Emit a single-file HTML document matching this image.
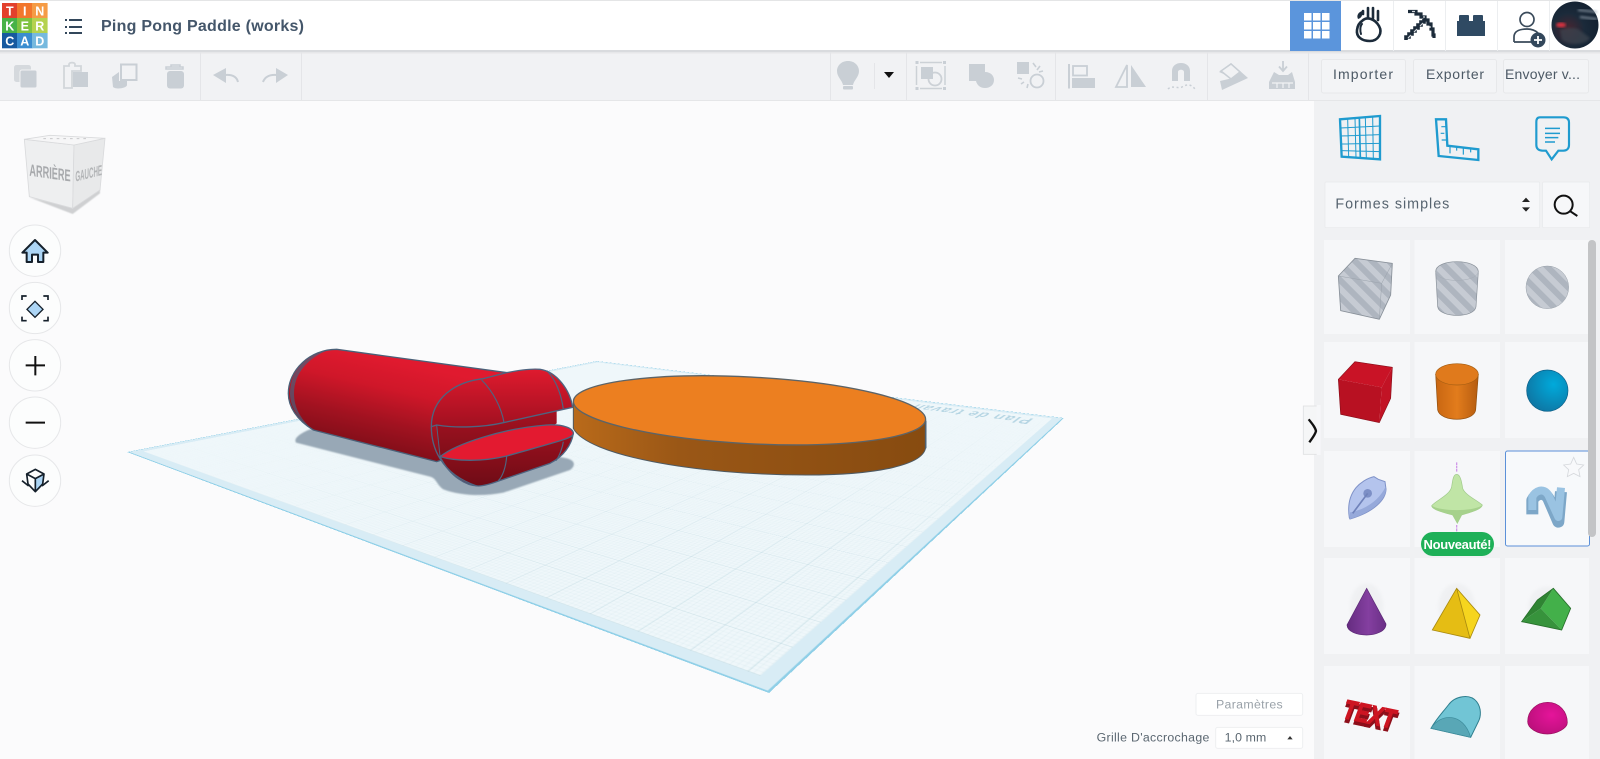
<!DOCTYPE html>
<html lang="fr">
<head>
<meta charset="utf-8">
<title>Ping Pong Paddle (works)</title>
<style>
html,body{margin:0;padding:0;width:1600px;height:759px;overflow:hidden;background:#fbfbfc;font-family:"Liberation Sans",sans-serif}
#plane{position:absolute;left:0;top:0;width:1000px;height:1000px;box-sizing:border-box;transform-origin:0 0;
transform:matrix3d(.89093,.16353,0,.00070507,.23985,-.1214,0,-.00052295,0,0,1,0,127,452,0,1);
background:#d8ecf5;border:2px solid #8fcfe7;overflow:hidden}
#plane .in{position:absolute;left:13px;top:13px;right:13px;bottom:13px;background-color:#eff7fa}
#plane .grid{position:absolute;left:0;top:0;right:0;bottom:0;
background-image:
linear-gradient(to right,rgba(135,180,195,.2) 1px,transparent 1px),
linear-gradient(to bottom,rgba(135,180,195,.2) 1px,transparent 1px),
linear-gradient(to right,rgba(150,195,210,.09) 1px,transparent 1px),
linear-gradient(to bottom,rgba(150,195,210,.09) 1px,transparent 1px);
background-size:48px 48px,48px 48px,4.8px 4.8px,4.8px 4.8px;
-webkit-mask-image:radial-gradient(circle at 0% 100%,#000 15%,rgba(0,0,0,.3) 50%,transparent 80%);
mask-image:radial-gradient(circle at 0% 100%,#000 15%,rgba(0,0,0,.3) 50%,transparent 80%)}
#plane .lbl{position:absolute;left:905px;top:960px;transform-origin:0 0;transform:rotate(-90deg) scaleX(.34);font:bold 70px/1 "Liberation Sans",sans-serif;color:#b5d5e3;white-space:nowrap;letter-spacing:6px}
#art{position:absolute;left:0;top:0;filter:blur(.3px)}
#art text{font-family:"Liberation Sans",sans-serif}
</style>
</head>
<body>
<div id="plane"><div class="in"><div class="grid"></div></div><div class="lbl">Plan de travail</div></div>
<svg id="art" width="1600" height="759" viewBox="0 0 1600 759" xmlns="http://www.w3.org/2000/svg">
<defs>
<pattern id="st" width="36" height="36" patternUnits="userSpaceOnUse" patternTransform="rotate(-45)"><rect width="36" height="36" fill="#aeb5bf"/><rect width="18" height="36" fill="#c6cbd3"/></pattern>
<linearGradient id="capG" gradientUnits="userSpaceOnUse" x1="350" y1="85" x2="285" y2="370"><stop offset="0" stop-color="#e01a2f"/><stop offset=".3" stop-color="#cf1729"/><stop offset=".65" stop-color="#a01220"/><stop offset="1" stop-color="#7a0d17"/></linearGradient>
<linearGradient id="topG" x1="0" y1="0" x2="0" y2="1"><stop offset="0" stop-color="#df1a2e"/><stop offset="1" stop-color="#a01020"/></linearGradient>
<linearGradient id="lowG" x1="0" y1="0" x2="0" y2="1"><stop offset="0" stop-color="#9a101e"/><stop offset="1" stop-color="#6f0c16"/></linearGradient>
<linearGradient id="midG" x1="0" y1="0" x2="0" y2="1"><stop offset="0" stop-color="#a81222"/><stop offset="1" stop-color="#7f0e19"/></linearGradient>
<linearGradient id="diskS" x1="0" y1="0" x2="1" y2="0"><stop offset="0" stop-color="#b96a1a"/><stop offset=".3" stop-color="#9a5716"/><stop offset="1" stop-color="#874b10"/></linearGradient>
<linearGradient id="cyl" x1="0" y1="0" x2="1" y2="0"><stop offset="0" stop-color="#c86612"/><stop offset=".5" stop-color="#e27c1c"/><stop offset="1" stop-color="#b55c10"/></linearGradient>
<linearGradient id="cone" x1="0" y1="0" x2="1" y2="0"><stop offset="0" stop-color="#652c80"/><stop offset=".55" stop-color="#843fa0"/><stop offset="1" stop-color="#6a2f86"/></linearGradient>
<radialGradient id="sph" cx=".65" cy=".35" r=".8"><stop offset="0" stop-color="#00aadb"/><stop offset="1" stop-color="#10709d"/></radialGradient>
<radialGradient id="sph2" cx=".6" cy=".4" r=".8"><stop offset="0" stop-color="#e5149a"/><stop offset="1" stop-color="#b30f75"/></radialGradient>
<radialGradient id="ava" cx=".35" cy=".6" r=".7"><stop offset="0" stop-color="#4a2530"/><stop offset=".5" stop-color="#1b2a3a"/><stop offset="1" stop-color="#122030"/></radialGradient>
<filter id="bl"><feGaussianBlur stdDeviation="1.2"/></filter>
<filter id="bl6"><feGaussianBlur stdDeviation="5"/></filter>
<filter id="bl3"><feGaussianBlur stdDeviation="2"/></filter>
</defs>

<!-- header -->
<rect x="0" y="0" width="1600" height="51" fill="#fff"/>
<rect x="0" y="0" width="1600" height="1" fill="#e4e5e6"/>
<rect x="0" y="52" width="1600" height="48" fill="#f1f2f4"/>
<rect x="0" y="50" width="1600" height="2" fill="#d9dbde"/>
<rect x="0" y="52" width="1600" height="1.5" fill="#e6e7e9"/>
<rect x="0" y="100" width="1600" height="1" fill="#e5e6e8"/>

<!-- logo -->
<g font-weight="700" font-size="12.5" fill="#fff" text-anchor="middle">
<rect x="2" y="3" width="15.6" height="15.3" fill="#e2402c"/><rect x="17" y="3" width="15.6" height="15.3" fill="#f2762c"/><rect x="32" y="3" width="15.6" height="15.3" fill="#f59b45"/>
<rect x="2" y="18" width="15.6" height="15.3" fill="#47b247"/><rect x="17" y="18" width="15.6" height="15.3" fill="#7fc241"/><rect x="32" y="18" width="15.6" height="15.3" fill="#b5d24f"/>
<rect x="2" y="33" width="15.6" height="15.3" fill="#17599f"/><rect x="17" y="33" width="15.6" height="15.3" fill="#3a8dd0"/><rect x="32" y="33" width="15.6" height="15.3" fill="#76b9de"/>
<text x="9.8" y="15.500">T</text><text x="24.8" y="15.500">I</text><text x="39.8" y="15.500">N</text>
<text x="9.8" y="30.500">K</text><text x="24.8" y="30.500">E</text><text x="39.8" y="30.500">R</text>
<text x="9.8" y="45.500">C</text><text x="24.8" y="45.500">A</text><text x="39.8" y="45.500">D</text>
</g>
<!-- hamburger -->
<g fill="#33475b"><rect x="65" y="19" width="2" height="2"/><rect x="65" y="26" width="2" height="2"/><rect x="65" y="32" width="2" height="2"/><rect x="69" y="19" width="13" height="2"/><rect x="69" y="26" width="13" height="2"/><rect x="69" y="32" width="13" height="2"/></g>
<text x="101" y="31" font-size="16" font-weight="700" fill="#44566a" textLength="203" lengthAdjust="spacing">Ping Pong Paddle (works)</text>

<!-- header right -->
<rect x="1290" y="1" width="51" height="50" fill="#5b95dc"/>
<g fill="#fff"><rect x="1304" y="13" width="7.5" height="7.5"/><rect x="1313" y="13" width="7.5" height="7.5"/><rect x="1322" y="13" width="7.5" height="7.5"/><rect x="1304" y="22" width="7.5" height="7.5"/><rect x="1313" y="22" width="7.5" height="7.5"/><rect x="1322" y="22" width="7.5" height="7.5"/><rect x="1304" y="31" width="7.5" height="7.5"/><rect x="1313" y="31" width="7.5" height="7.5"/><rect x="1322" y="31" width="7.5" height="7.5"/></g>
<g fill="#eceef0"><rect x="1393" y="1" width="1" height="50"/><rect x="1445" y="1" width="1" height="50"/><rect x="1497" y="1" width="1" height="50"/><rect x="1549" y="1" width="1" height="50"/></g>
<!-- rock -->
<g fill="none" stroke="#1c2b3a" stroke-width="2.6" stroke-linecap="round"><path d="M1362 21C1367 16 1375 19 1379 26C1383 33 1378 41 1370 41C1362 41 1356 37 1357 30C1357.500 26 1359 23 1362 21Z"/><path d="M1362 24C1360 26 1360 31 1361 34" stroke-width="2"/><path d="M1368 8V17M1373 8V18M1378 11V20M1363 11V14"/></g>
<path d="M1358 19C1356 15 1359 12 1362 11C1363 14 1362 18 1358 19Z" fill="#1c2b3a"/>
<!-- pickaxe -->
<path d="M1406 40V37H1409V34H1412V31H1415V28H1418V25H1421V22H1424V19" fill="none" stroke="#1c2b3a" stroke-width="3.600"/>
<path d="M1408 38L1411 35M1414 32L1417 29M1420 26L1423 23" stroke="#d5d9dd" stroke-width="1.200"/>
<path d="M1408 11.500H1416V14H1421V17H1425V20H1428V24H1431V29H1433V35H1434V38" fill="none" stroke="#1c2b3a" stroke-width="3.200"/>
<path d="M1412 11.500H1415M1423 17H1425M1430 26V28" stroke="#d5d9dd" stroke-width="1.200"/>
<!-- brick -->
<g fill="#2f4a63"><rect x="1457" y="21" width="28" height="15"/><rect x="1459" y="15" width="10" height="7" rx="1"/><rect x="1473" y="15" width="10" height="7" rx="1"/></g>
<!-- user -->
<g fill="none" stroke="#3a4a5a" stroke-width="1.7"><circle cx="1527" cy="19.500" r="7"/><path d="M1514 42V37C1514 31 1520 29 1527 29C1532 29 1535 30 1538 33M1514 42H1531"/></g>
<circle cx="1538" cy="40" r="7.500" fill="#33475b"/><path d="M1534 40H1542M1538 36V44" stroke="#fff" stroke-width="1.800"/>
<!-- avatar -->
<circle cx="1575" cy="25" r="23.500" fill="url(#ava)"/>
<path d="M1560 30C1566 28 1572 27 1578 29L1590 38C1586 45 1570 46 1562 40Z" fill="#3a424e" opacity=".8" filter="url(#bl)"/>
<ellipse cx="1561" cy="25" rx="5" ry="2.500" fill="#d53340" filter="url(#bl)"/>
<path d="M1578 10L1597 12M1580 17L1597 19" stroke="#9aa6b2" stroke-width="1.600" filter="url(#bl)"/>

<!-- toolbar dividers -->
<g fill="#e4e5e8"><rect x="200" y="52" width="1" height="48"/><rect x="301" y="52" width="1" height="48"/><rect x="830" y="52" width="1" height="48"/><rect x="906" y="52" width="1" height="48"/><rect x="1055" y="52" width="1" height="48"/><rect x="1207" y="52" width="1" height="48"/><rect x="1308" y="52" width="1" height="48"/><rect x="874" y="63" width="1" height="26"/></g>
<!-- toolbar icons -->
<g fill="#c9cfd5">
<rect x="14" y="65" width="17" height="17" rx="2.500" fill="#d5d9dd"/><rect x="20" y="70" width="17" height="18" rx="2" stroke="#f1f2f4" stroke-width="1"/>
<path d="M64 66H69V64.500C69 62 75 62 75 64.500V66H81V71H72V88H64Z" fill="none" stroke="#d2d6da" stroke-width="1.800"/><rect x="73" y="72" width="15" height="15"/>
<rect x="121" y="64.500" width="15.500" height="15.500" fill="none" stroke="#c9cfd5" stroke-width="2"/><path d="M119 72V81H127V85C127 88 116 90 113 87L112 77Z"/>
<path d="M168 67H183V69H166V67ZM171 67V65H180V67" fill="none" stroke="#c9cfd5" stroke-width="1.500"/><rect x="167" y="71" width="17" height="17.500" rx="3"/>
<path d="M213 75L226 68V83Z"/><path d="M225 75Q236 74 238 82" fill="none" stroke="#c9cfd5" stroke-width="2"/>
<path d="M288 75L276 68V83Z"/><path d="M277 75Q266 74 263 82" fill="none" stroke="#c9cfd5" stroke-width="2"/>
<!-- bulb -->
<path d="M848 61C841 61 837 66 837 71C837 77 842 80 843 85H853C854 80 859 77 859 71C859 66 855 61 848 61Z"/><rect x="843" y="86" width="10" height="3.500" rx="1"/>
<!-- group -->
<g fill="none" stroke="#ccd1d6" stroke-width="1.500"><path d="M920 62.500H942M920 88.500H942M916.500 66V85M945 66V85"/><circle cx="935" cy="79" r="6.500" stroke-width="1.800"/></g>
<rect x="915.500" y="61" width="3" height="3"/><rect x="943" y="61" width="3" height="3"/><rect x="915.500" y="87" width="3" height="3"/><rect x="943" y="87" width="3" height="3"/>
<rect x="921" y="67" width="12" height="12"/>
<!-- union -->
<path d="M969 64H985V72C991 72 994 76 994 80C994 85 990 88 985 88C980 88 977 85 976 81H969Z"/>
<!-- explode -->
<rect x="1017" y="62" width="12" height="12"/><circle cx="1037" cy="81" r="6.500" fill="none" stroke="#c9cfd5" stroke-width="1.800"/>
<path d="M1033 63L1036 67M1040 66L1037 70M1043 71L1039 72M1018 78L1022 79M1021 84L1024 82M1027 88L1028 84" stroke="#c9cfd5" stroke-width="1.600"/>
<!-- align -->
<rect x="1068" y="64" width="2" height="24.500"/><rect x="1073" y="66" width="14" height="9.500" fill="none" stroke="#c9cfd5" stroke-width="1.800"/><rect x="1072" y="78" width="23" height="10"/>
<!-- mirror -->
<path d="M1127 65L1116 87H1127Z" fill="none" stroke="#c9cfd5" stroke-width="1.800"/><path d="M1131 65L1146 87H1131Z"/>
<!-- magnet -->
<path d="M1172 81V71C1172 66 1176 63 1181 63C1186 63 1190 66 1190 71V81H1184V72C1184 69 1178 69 1178 72V81Z"/>
<path d="M1168 89C1172 85 1178 89 1182 87C1187 84 1191 84 1195 89" fill="none" stroke="#c9cfd5" stroke-width="1.500" stroke-dasharray="2 2.500"/>
<!-- slice -->
<path d="M1219 72L1231 63L1248 78L1222 90L1220 81L1233 78Z"/><path d="M1221 71L1231 64L1240 72L1231 79Z" fill="#f1f2f4" stroke="#c9cfd5" stroke-width="1.500"/>
<!-- drop -->
<path d="M1283 61V70M1279 66.500L1283 71L1287 66.500" fill="none" stroke="#c9cfd5" stroke-width="1.800"/>
<path d="M1274 72L1279 75H1288L1292 72L1295 82V89H1269V82Z"/><path d="M1272 83H1293M1277 83V88M1283 83V88M1289 83V88" stroke="#f1f2f4" stroke-width="1.200"/>
</g>
<path d="M884 72H894L889 78Z" fill="#111"/>
<!-- buttons -->
<g fill="#f3f4f6" stroke="#e7e8ea"><rect x="1321.500" y="59.500" width="84" height="33.500" rx="2"/><rect x="1413.500" y="59.500" width="83" height="33.500" rx="2"/><rect x="1503.500" y="59.500" width="85" height="33.500" rx="2"/></g>
<g font-size="14" fill="#4c5965"><text x="1333" y="79" textLength="60" lengthAdjust="spacing">Importer</text><text x="1426" y="79" textLength="58" lengthAdjust="spacing">Exporter</text><text x="1505" y="79" textLength="75" lengthAdjust="spacing">Envoyer v...</text></g>

<!-- sidebar -->
<rect x="1314" y="101" width="286" height="658" fill="#f0f1f3"/>
<g transform="translate(1300 100) scale(.33333)">
 <g fill="none" stroke="#1f9bcf">
  <path d="M120 58L240 48V178L125 170Z" stroke-width="7"/>
  <path d="M121 84L240 78M122 108L240 104M123 132L240 130M124 152L240 155M143 56L146 171M165 54L168 173M196 51L199 175M218 50L220 177" stroke-width="3"/>
  <path d="M178 53L181 174" stroke-width="5"/>
  <path d="M408 58H438L442 137L535 148V180L416 168Z" stroke-width="7"/>
  <path d="M424 80H438M422 100H433M425 120H440M450 140V160M470 142V152M490 144V164M512 147V157" stroke-width="3.500"/>
  <path d="M720 52H790C802 52 807 58 807 68V135C807 146 800 152 790 152H775L755 178L738 152H728C716 152 709 146 709 135V66C709 58 712 52 720 52Z" stroke-width="6.500"/>
  <path d="M735 85H780M735 100H780M735 113H775M735 126H765" stroke-width="4.500"/>
 </g>
 <rect x="75" y="246" width="644" height="137" rx="3" fill="#f6f7f9" stroke="#e8e9eb" stroke-width="2"/>
 <rect x="728" y="246" width="141" height="137" rx="3" fill="#f6f7f9" stroke="#e8e9eb" stroke-width="2"/>
 <text x="106" y="326" font-size="43" fill="#56636f" textLength="342" lengthAdjust="spacing">Formes simples</text>
 <path d="M678 293L690 306H666ZM678 335L690 322H666Z" fill="#222"/>
 <circle cx="791" cy="314" r="27" fill="none" stroke="#111" stroke-width="6"/><path d="M811 334L832 348" stroke="#111" stroke-width="6"/>
</g>

<!-- tiles -->
<g fill="#f6f7f9">
<rect x="1324" y="240" width="86" height="94"/><rect x="1414.500" y="240" width="85.500" height="94"/><rect x="1505" y="240" width="84" height="94"/>
<rect x="1324" y="342" width="86" height="96"/><rect x="1414.500" y="342" width="85.500" height="96"/><rect x="1505" y="342" width="84" height="96"/>
<rect x="1324" y="451" width="86" height="96"/><rect x="1414.500" y="451" width="85.500" height="96"/>
<rect x="1324" y="558" width="86" height="96"/><rect x="1414.500" y="558" width="85.500" height="96"/><rect x="1505" y="558" width="84" height="96"/>
<rect x="1324" y="666" width="86" height="93"/><rect x="1414.500" y="666" width="85.500" height="93"/><rect x="1505" y="666" width="84" height="93"/>
</g>
<rect x="1505.500" y="451" width="84" height="95" rx="2" fill="#f7f9fb" stroke="#5b90d8"/>

<!-- row 1 striped -->
<g transform="translate(1300 100) scale(.33333)">
 <path d="M165 475L277 490L272 585L238 658L122 632L115 528Z" fill="url(#st)" stroke="#878f98" stroke-width="2.500"/>
 <path d="M115 528L245 550L277 490M245 550L238 658" fill="none" stroke="#9aa2ab" stroke-width="1.500"/>
 <path d="M407 515C407 475 533 475 535 515L528 620C525 655 418 655 413 620Z" fill="url(#st)" stroke="#878f98" stroke-width="2"/>
 <path d="M407 515C410 550 530 550 535 515" fill="none" stroke="#a5acb5" stroke-width="1.500"/>
 <circle cx="742" cy="562" r="64" fill="url(#st)" stroke="#9aa2ab" stroke-width="1.500"/>
</g>
<!-- row 2/3 -->
<g transform="translate(1300 335) scale(.33333)">
 <path d="M165 80L277 97L245 157L115 133Z" fill="#c91326"/><path d="M115 133L245 157L238 263L122 238Z" fill="#b81122"/><path d="M277 97L272 190L238 263L245 157Z" fill="#c21325"/>
 <path d="M165 80L277 97L272 190L238 263L122 238L115 133Z" fill="none" stroke="#8a0e1a" stroke-width="2"/>
 <path d="M407 118L413 225C420 262 522 262 527 225L535 118Z" fill="url(#cyl)" stroke="#8f4f10" stroke-width="2"/>
 <ellipse cx="471" cy="118" rx="64" ry="32" fill="#e07a1c" stroke="#a55e12" stroke-width="2"/>
 <circle cx="742" cy="167" r="62" fill="url(#sph)" stroke="#0d5f88" stroke-width="2"/>
 <!-- collapse tab -->
 <rect x="10" y="213" width="50" height="145" fill="#f5f6f7" stroke="#dfe0e2" stroke-width="2.500"/>
 <rect x="50" y="210" width="12" height="150" fill="#f6f7f9"/>
 <path d="M26 253C38 268 46 278 48 288C46 298 38 308 28 322" fill="none" stroke="#111" stroke-width="7"/>
 <!-- pen -->
 <path d="M148 548C142 510 150 480 168 458C180 444 200 430 222 425L235 433L255 440L258 462C258 492 225 530 150 552Z" fill="#b4c4ed" stroke="#7f92c8" stroke-width="3"/>
 <path d="M150 532C205 522 240 490 257 455L258 468C250 500 215 532 150 552Z" fill="#96a9da"/>
 <circle cx="203" cy="475" r="13" fill="#7c8fc6"/><path d="M203 475L158 535" stroke="#6f82ba" stroke-width="5"/>
 <!-- spinner -->
 <path d="M470 382V412M470 570V592" stroke="#d09ae8" stroke-width="4" stroke-dasharray="8 2"/>
 <path d="M470 418C481 418 485 440 488 460C495 480 530 495 547 510C545 525 500 535 485 540L472 565L458 540C440 535 395 525 395 512C410 495 450 480 455 455C458 435 460 418 470 418Z" fill="#c0e5a6" stroke="#9fca8a" stroke-width="2"/>
 <path d="M395 512C420 530 525 530 547 510C545 525 500 535 485 540L472 565L458 540C440 535 395 525 395 512Z" fill="#a6d18c"/>
 <!-- squiggle -->
 <path d="M697 530L697 488C705 470 730 458 745 482L775 552L783 462" fill="none" stroke="#7da7c8" stroke-width="36" stroke-linejoin="round" transform="translate(0 8)"/>
 <path d="M697 525L697 486C705 468 730 456 745 480L775 546L783 458" fill="none" stroke="#9ac3e2" stroke-width="24" stroke-linejoin="round"/>
 <path d="M821 367L830 387L851 390L836 404L840 425L821 415L802 425L806 404L791 390L812 387Z" fill="#f8f9fb" stroke="#d5d8dc" stroke-width="2.500"/>
</g>
<rect x="1588" y="240" width="8" height="297" rx="4" fill="#c3c4c6"/>
<rect x="1421" y="532" width="73" height="24" rx="12" fill="#1eb058"/>
<text x="1457.500" y="549" text-anchor="middle" font-size="13" font-weight="700" fill="#fff" textLength="68" lengthAdjust="spacing">Nouveauté!</text>

<!-- row 4/5 -->
<g transform="translate(1300 550) scale(.33333)">
 <ellipse cx="200" cy="170" rx="50" ry="70" fill="#d6d8da" opacity=".2" filter="url(#bl6)"/>
 <ellipse cx="470" cy="170" rx="55" ry="70" fill="#d6d8da" opacity=".2" filter="url(#bl6)"/>
 <ellipse cx="740" cy="170" rx="55" ry="60" fill="#d6d8da" opacity=".2" filter="url(#bl6)"/>
 <path d="M200 115L258 222C258 245 225 255 200 255C170 255 142 245 141 225Z" fill="url(#cone)" stroke="#5a2875" stroke-width="2"/>
 <path d="M470 115L397 240L510 265Z" fill="#e5bd14"/><path d="M470 115L510 265L540 195Z" fill="#f6d51e"/>
 <path d="M470 115L397 240L510 265L540 195Z M470 115L510 265" fill="none" stroke="#a98a10" stroke-width="2.500"/>
 <path d="M760 115L812 175L785 240L722 175Z" fill="#43b04a"/><path d="M760 115L722 175L665 215L712 150Z" fill="#2f8433"/><path d="M722 175L785 240L665 215Z" fill="#37933c"/>
 <path d="M760 115L812 175L785 240L665 215L712 150Z" fill="none" stroke="#266f2a" stroke-width="2.500"/>
 <text x="0" y="0" font-size="80" font-weight="700" font-style="italic" fill="#8d0f1b" stroke="#8d0f1b" stroke-width="8" transform="translate(126 512) rotate(12)" textLength="156" lengthAdjust="spacingAndGlyphs">TEXT</text>
 <text x="0" y="0" font-size="80" font-weight="700" font-style="italic" fill="#cd1522" stroke="#cd1522" stroke-width="4" transform="translate(126 503) rotate(12)" textLength="156" lengthAdjust="spacingAndGlyphs">TEXT</text>
 <path d="M393 535C410 505 430 485 445 465C465 437 510 430 530 455C545 475 543 500 535 515L512 562Z" fill="#71c5d5" stroke="#2f7f8f" stroke-width="3"/>
 <path d="M393 535C420 490 490 485 512 562Z" fill="#59a7b6" stroke="#3c8b9b" stroke-width="2"/>
 <path d="M683 515C683 480 712 457 743 457C778 457 802 485 802 518C802 535 770 552 742 552C712 552 683 535 683 515Z" fill="url(#sph2)" stroke="#99105f" stroke-width="2"/>
</g>

<!-- params -->
<g transform="translate(1060 680) scale(.33333)">
 <rect x="408" y="40" width="320" height="66" rx="6" fill="#fff" stroke="#eeeff1" stroke-width="3"/>
 <text x="468" y="85" font-size="37" fill="#9aa2a9" textLength="200" lengthAdjust="spacing">Paramètres</text>
 <text x="110" y="184" font-size="37" fill="#5a6670" textLength="338" lengthAdjust="spacing">Grille D'accrochage</text>
 <rect x="467" y="142" width="261" height="63" rx="6" fill="#fff" stroke="#eeeff1" stroke-width="3"/>
 <text x="494" y="184" font-size="37" fill="#5a6670" textLength="125" lengthAdjust="spacing">1,0 mm</text>
 <path d="M690 168L698 178H682Z" fill="#333"/>
</g>

<!-- view cube + nav -->
<g transform="translate(0 110) scale(.33333)">
 <path d="M88 262L218 312L300 250L300 235L218 290Z" fill="#cfd0d2" filter="url(#bl)"/>
 <path d="M73 88L222 105L218 295L88 260Z" fill="#eeeff0" stroke="#d9dadc" stroke-width="2.500"/>
 <path d="M222 105L315 85L300 240L218 295Z" fill="#e8e9ea" stroke="#d9dadc" stroke-width="2.500"/>
 <path d="M73 88L150 76L315 85L222 105Z" fill="#f6f6f7" stroke="#d9dadc" stroke-width="2.500"/>
 <path d="M130 86H270" stroke="#c8c9cb" stroke-width="3" stroke-dasharray="8 12"/>
 <text transform="translate(88 197) skewY(8)" font-size="50" font-weight="700" fill="#a7a9ac" textLength="124" lengthAdjust="spacingAndGlyphs">ARRIÈRE</text>
 <text transform="translate(226 215) skewY(-14)" font-size="44" font-weight="700" fill="#b2b4b6" textLength="80" lengthAdjust="spacingAndGlyphs">GAUCHE</text>
 <g fill="#fcfdfd" stroke="#e6e7e9" stroke-width="3">
  <circle cx="105" cy="422" r="77"/><circle cx="105" cy="594" r="77"/><circle cx="105" cy="766" r="77"/><circle cx="105" cy="938" r="77"/><circle cx="105" cy="1112" r="77"/>
 </g>
 <path d="M105 390L143 428H130V456H114V434H96V456H80V428H67Z" fill="#acd5f5" stroke="#15202b" stroke-width="6" stroke-linejoin="round"/>
 <path d="M105 574L129 598L105 622L81 598Z" fill="#acd5f5" stroke="#15202b" stroke-width="4"/>
 <path d="M66 570V558H80M130 558H144V570M66 620V632H80M130 632H144V620" fill="none" stroke="#15202b" stroke-width="5"/>
 <path d="M77 766H135M106 738V796" fill="none" stroke="#111" stroke-width="6"/>
 <path d="M77 938H135" stroke="#111" stroke-width="6"/>
 <path d="M106 1145V1106L132 1092L128 1122Z" fill="#acd5f5"/>
 <path d="M80 1092L106 1078L132 1092L128 1122L106 1145L84 1122ZM80 1092L106 1106L132 1092M106 1106V1145" fill="none" stroke="#15202b" stroke-width="5" stroke-linejoin="round"/>
 <path d="M66 1112L86 1128M146 1112L126 1128" stroke="#15202b" stroke-width="5"/>
</g>

<!-- shadow & capsule -->
<g transform="translate(270 330) scale(.33333)">
 <path d="M120 298C90 310 70 325 78 338L480 440C500 445 500 465 520 478C570 497 640 500 700 488L900 420C920 405 915 388 880 383L500 300Z" fill="#98a8b6" filter="url(#bl3)"/>
 <path d="M200 58L712 128L850 280L500 395L130 300C80 270 55 230 55 190C55 120 120 58 200 58Z" fill="url(#capG)" stroke="#4a6078" stroke-width="4" stroke-linejoin="round"/>
 <path d="M60 190C60 130 100 80 170 62C115 85 72 130 72 190C72 230 90 265 125 296C85 270 60 230 60 190Z" fill="#4a5f7a" opacity=".7"/>
 <!-- cap region behind -->
 <path d="M500 285L860 230V280L705 378L510 380Z" fill="url(#midG)"/>
 <!-- top half -->
 <path d="M484 290C484 205 555 155 640 146L710 128C740 122 780 115 810 118C860 125 900 180 908 232L700 278C640 292 560 295 500 285Z" fill="url(#topG)" stroke="#4f6480" stroke-width="4" stroke-linejoin="round"/>
 <path d="M635 150C670 185 695 235 702 278M830 122C860 150 875 200 880 238" fill="none" stroke="#4f6480" stroke-width="3.500"/>
 <!-- lower bowl -->
 <path d="M510 380C540 440 590 468 625 468C650 468 680 455 700 448L840 400C880 380 905 345 910 310L710 378Z" fill="url(#lowG)" stroke="#4f6480" stroke-width="4" stroke-linejoin="round"/>
 <path d="M484 290C484 350 510 430 620 468" fill="none" stroke="#4f6480" stroke-width="4"/>
 <path d="M500 285L510 378" fill="none" stroke="#4f6480" stroke-width="3"/>
 <path d="M710 378C708 410 698 440 685 452M880 335C878 350 870 375 858 392" fill="none" stroke="#4f6480" stroke-width="3.500"/>
 <!-- flat red -->
 <path d="M510 380C560 340 700 295 830 285C880 282 912 295 910 312C905 325 880 330 710 378C640 395 560 395 510 380Z" fill="#e31a30" stroke="#4f6480" stroke-width="4"/>
</g>

<!-- orange disk -->
<g transform="translate(560 350) scale(.33333)">
 <path d="M40 160V235C80 315 400 375 740 375C950 375 1095 345 1097 290V212Z" fill="url(#diskS)" stroke="#4f5a62" stroke-width="3"/>
 <path d="M1097 212V295" stroke="#4f6274" stroke-width="5"/>
 <ellipse cx="568.500" cy="181" rx="529" ry="100" transform="rotate(3 568.500 181)" fill="#ec7f20" stroke="#5c6468" stroke-width="4"/>
</g>
</svg>
</body>
</html>
